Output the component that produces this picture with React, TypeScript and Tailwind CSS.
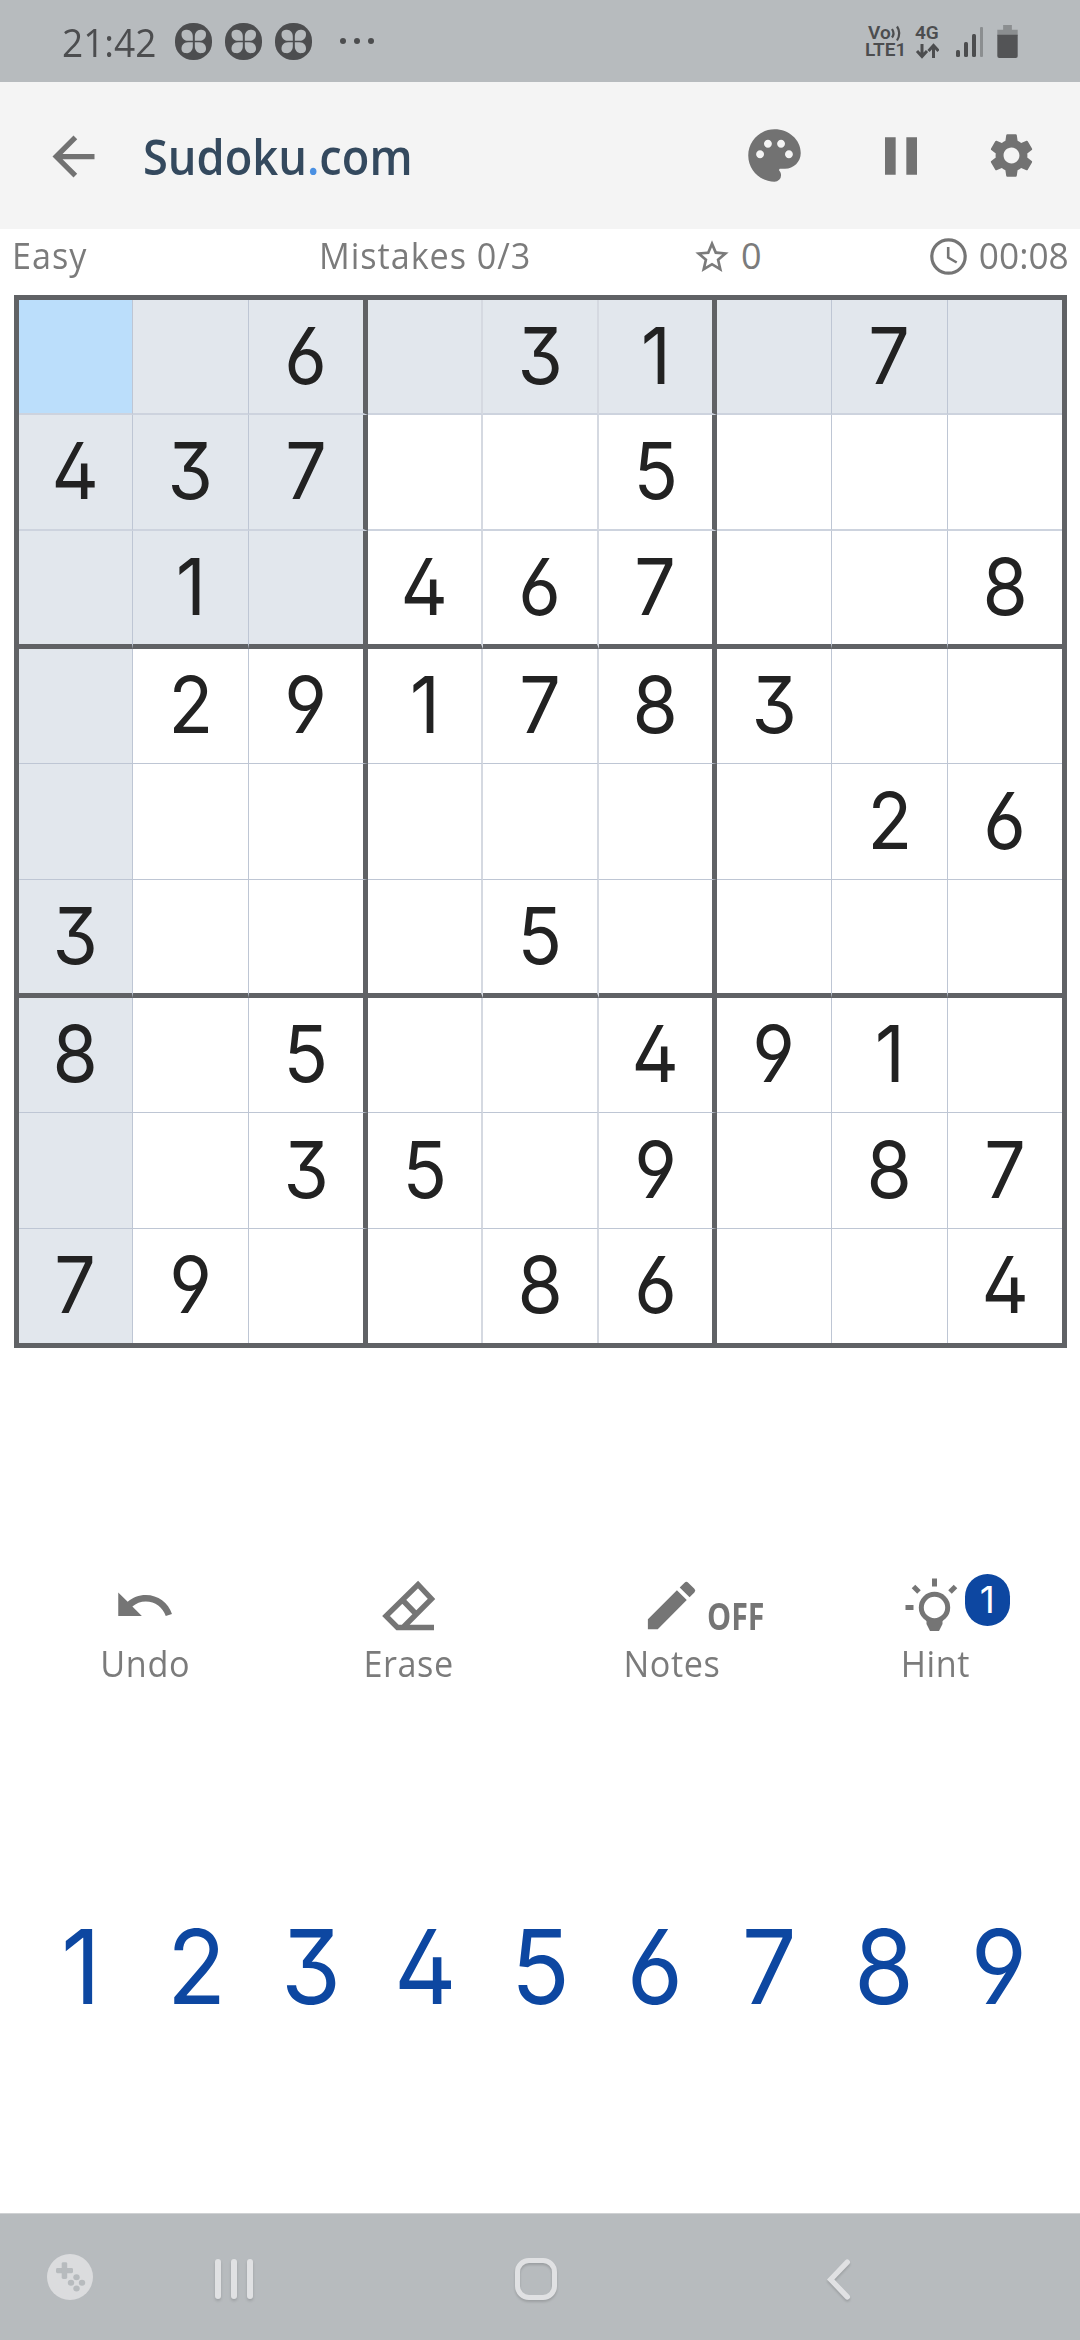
import type { ReactNode } from "react";
import { MdArrowBack, MdEdit, MdPalette, MdPause, MdSettings, MdStarBorder, MdUndo } from "react-icons/md";

const BOARD = [
  "..6.31.7.",
  "437..5...",
  ".1.467..8",
  ".291783..",
  ".......26",
  "3...5....",
  "8.5..491.",
  "..35.9.87",
  "79..86..4",
];

const TEXT = "font-['Open_Sans','Noto_Sans',sans-serif]";
const DIGIT = "font-['Inter','Noto_Sans',sans-serif] [font-feature-settings:'ss01','cv02','cv03','cv04','cv09']";

function Clover() {
  return (
    <svg viewBox="0 0 37 38" className="size-[37px]" preserveAspectRatio="none">
      <rect width="37" height="38" rx="18" fill="#4c4d4f" />
      <g fill="#b7bbbe">
        <path d="M17.8 18.2H13C8.500 18.200 6.500 15 6.500 11.500S9 7 12 7C15.500 7 17.800 10 17.800 14Z" />
        <path d="M19.800 18.200H24.500C29 18.200 31 15 31 11.500S28.500 7 25.500 7C22 7 19.800 10 19.800 14Z" />
        <path d="M17.800 19.800H13C8.500 19.800 6.500 23 6.500 26.500S9 31 12 31C15.500 31 17.800 28 17.800 24Z" />
        <path d="M19.800 19.800H24.500C29 19.800 31 23 31 26.500S28.500 31 25.500 31C22 31 19.800 28 19.800 24Z" />
      </g>
    </svg>
  );
}

function StatusBar() {
  return (
    <header className="flex h-[82px] items-start bg-[#b7bbbe] text-[#4c4d4f]">
      <div className={`${TEXT} ml-[62px] mt-[17px] w-[113px] text-[39px] leading-[50px]`}>
        <span className="inline-block origin-left scale-x-[0.95] font-normal">21:42</span>
      </div>
      <div className="mt-[23px] flex gap-[13px]">
        <Clover />
        <Clover />
        <Clover />
      </div>
      <div className="ml-[28px] mt-[38px] flex gap-2">
        <i className="size-1.5 rounded-full bg-[#4c4d4f]" />
        <i className="size-1.5 rounded-full bg-[#4c4d4f]" />
        <i className="size-1.5 rounded-full bg-[#4c4d4f]" />
      </div>
      <div className="ml-auto mr-[62px] flex font-['Roboto',sans-serif] font-semibold">
        <div className="mt-6 w-[50px] text-[19px]">
          <div className="flex h-[17px] pl-[3px] leading-[17px]">
            Vo
            <svg viewBox="0 0 12 18" className="h-[18px] w-3" fill="none" stroke="#4c4d4f" strokeWidth="2.200">
              <path d="M1 5q3 4.500 0 8.500M6 2.500q4.500 6.500 0 14" />
            </svg>
          </div>
          <div className="h-[17px] leading-[17px]">LTE1</div>
        </div>
        <div className="mt-[23px] w-[41px] text-[19px] leading-[20px]">
          4G
          <svg viewBox="0 0 24 16" className="h-4 w-6" fill="none" stroke="#4c4d4f" strokeWidth="3">
            <path d="M7 1v12M2 8l5 5.500L12 8M18.500 15V3M13.500 8l5-5.500 5 5.500" />
          </svg>
        </div>
        <svg viewBox="0 0 27 31" className="mr-[14px] mt-[26px] h-[31px] w-[27px]" fill="#4c4d4f">
          <rect x="0" y="24" width="4" height="7" rx="1.500" />
          <rect x="8" y="16" width="4" height="15" rx="1.500" />
          <rect x="16" y="8" width="4" height="23" rx="1.500" />
          <rect x="24" y="1" width="3" height="30" rx="1" fill="#8b8e90" />
        </svg>
        <svg viewBox="0 0 21 34" className="mt-[25px] h-[33px] w-[21px]">
          <path d="M6 0h9v5h6v6H0V5h6z" fill="#8b8e90" />
          <path d="M0 10h21v22q0 2-2 2H2q-2 0-2-2z" fill="#535456" />
        </svg>
      </div>
    </header>
  );
}

function TitleBar() {
  return (
    <div className="flex h-[147px] items-center bg-[#f4f4f4] text-[#727272]">
      <MdArrowBack className="ml-[42px] mt-px size-[63px]" />
      <h1 className={`${TEXT} ml-[38px] pt-0.5 text-[48px] font-semibold leading-[66px] text-[#34495e]`}>
        <span className="inline-block origin-left scale-x-[0.942]">
          Sudoku<span className="text-[#4a90e2]">.</span>com
        </span>
      </h1>
      <div className="ml-auto flex items-center">
        <MdPalette className="mr-[63px] size-[63px]" />
        <MdPause className="mr-[52px] size-[64px]" />
        <MdSettings className="mr-[42px] size-[53px]" />
      </div>
    </div>
  );
}

function InfoRow() {
  return (
    <div className={`${TEXT} flex h-[66px] items-center pb-[13px] text-[36px] text-[#7b7b7b]`}>
      <div className="ml-3 w-[307px]">
        <span className="inline-block origin-left scale-x-[0.95] tracking-[1px]">Easy</span>
      </div>
      <div className="w-[373px]">
        <span className="inline-block origin-left scale-x-[0.95] tracking-[1px]">Mistakes 0/3</span>
      </div>
      <MdStarBorder className="mt-0.5 size-10" />
      <div className="ml-[9px]">0</div>
      <svg viewBox="0 0 37 37" className="ml-auto mr-3 mt-0.5 size-[37px]" fill="none" stroke="#757575" strokeWidth="3.200">
        <circle cx="18.500" cy="18.500" r="16.700" />
        <path d="M18.200 9v10.500l8.500 5" strokeWidth="2.600" />
      </svg>
      <div className="-ml-0.5 mr-[11px]">
        <span className="inline-block origin-right scale-x-[0.98]">00:08</span>
      </div>
    </div>
  );
}

function cellClass(r: number, c: number) {
  const parts = ["flex items-center justify-center pb-[2px]"];
  if (c === 2 || c === 5) parts.push("border-r-5 border-r-[#606265]");
  else if (c === 3 || c === 4) parts.push("border-r-2 border-r-[#d5d9e1]");
  else if (c !== 8) parts.push("border-r border-r-[#bec6d4]");
  if (r === 2 || r === 5) parts.push("border-b-5 border-b-[#606265]");
  else if (r < 2) parts.push("border-b-2 border-b-[#cdd3de]");
  else if (r !== 8) parts.push("border-b border-b-[#bec6d4]");
  if (r === 0 && c === 0) parts.push("bg-[#bbdefb]");
  else if (r === 0 || c === 0 || (r < 3 && c < 3)) parts.push("bg-[#e2e7ed]");
  return parts.join(" ");
}

function Board() {
  return (
    <div
      className={`${DIGIT} ml-[14px] grid w-[1053px] grid-cols-[114px_116px_119px_115px_116px_118px_115px_116px_114px] grid-rows-[115px_116px_118px_115px_116px_118px_115px_116px_114px] border-5 border-[#606265] text-[78px] leading-none text-[#222222]`}
    >
      {BOARD.flatMap((row, r) =>
        row.split("").map((d, c) => (
          <div key={`${r}-${c}`} className={cellClass(r, c)}>
            {d !== "." && <span className="inline-block scale-x-[0.94]">{d}</span>}
          </div>
        )),
      )}
    </div>
  );
}

function Tool({ label, children }: { label: string; children: ReactNode }) {
  return (
    <div className="flex flex-col items-center">
      <div className="relative size-[63px]">{children}</div>
      <div className={`${TEXT} mt-[2px] text-[36px] leading-[50px] text-[#7b7b7b]`}>
        <span className="inline-block scale-x-[0.95] tracking-[0.6px]">{label}</span>
      </div>
    </div>
  );
}

function Tools() {
  return (
    <div className="mt-[226px] grid grid-cols-4 px-[13px] text-[#757575]">
      <Tool label="Undo">
        <MdUndo className="size-[63px]" />
      </Tool>
      <Tool label="Erase">
        <svg viewBox="0 0 63 63" className="size-[63px]" fill="none" stroke="#757575" strokeWidth="5.400">
          <path d="M57 53.500H20.500L9 42 41 10.500 54.500 25 26 53.500M25.500 26L39.500 40.500" />
        </svg>
      </Tool>
      <Tool label="Notes">
        <MdEdit className="size-[63px]" />
        <span className={`${TEXT} absolute left-[67px] top-[22px] text-[37px] font-bold leading-[40px]`}>
          <span className="inline-block origin-left scale-x-[0.82]">OFF</span>
        </span>
      </Tool>
      <Tool label="Hint">
        <svg viewBox="0 0 63 63" className="size-[63px]" fill="none" stroke="#757575">
          <circle cx="30.500" cy="33.500" r="13.200" strokeWidth="5" />
          <path d="M30.500 4.500v8M1.500 33.500h8M9.500 12.500l5.500 5.500M51.500 12.500l-5.500 5.500" strokeWidth="5" />
          <path d="M22.500 45h16v5l-3.500 7h-9l-3.500-7z" fill="#757575" stroke="none" />
        </svg>
        <span className={`${DIGIT} absolute left-[61px] top-0 flex h-[52px] w-[45px] items-center justify-center rounded-full bg-[#0d47a1] text-[37px] text-white`}>
          1
        </span>
      </Tool>
    </div>
  );
}

function NumberPad() {
  return (
    <div className={`${DIGIT} mt-[214px] grid grid-cols-9 px-6 text-center text-[103px] leading-[128px] text-[#0d47a1]`}>
      {[1, 2, 3, 4, 5, 6, 7, 8, 9].map((n) => (
        <div key={n}>
          <span className="inline-block scale-x-[0.94]">{n}</span>
        </div>
      ))}
    </div>
  );
}

function NavBar() {
  return (
    <nav className="mt-auto flex h-[127px] items-center border-t border-[#cfd1d3] bg-[#b7bbbe]">
      <svg viewBox="0 0 46 48" className="ml-[47px] size-[46px]" preserveAspectRatio="none">
        <ellipse cx="23" cy="24" rx="23" ry="24" fill="#dbdcde" />
        <g fill="#b7bbbe">
          <rect x="9" y="14.500" width="17" height="5.500" rx="1.500" />
          <rect x="14.700" y="8.500" width="5.500" height="17.500" rx="1.500" />
          <circle cx="29.500" cy="24.300" r="3.200" />
          <circle cx="24" cy="30" r="3.200" />
          <circle cx="35" cy="30" r="3.200" />
          <circle cx="29.500" cy="36" r="3.200" />
        </g>
      </svg>
      <div className="ml-[122px] mt-1 flex gap-[10px]">
        <i className="h-10 w-1.5 rounded-full bg-[#e0e1e3] shadow-[0_2px_3px_rgba(0,0,0,0.150)]" />
        <i className="h-10 w-1.5 rounded-full bg-[#e0e1e3] shadow-[0_2px_3px_rgba(0,0,0,0.150)]" />
        <i className="h-10 w-1.5 rounded-full bg-[#e0e1e3] shadow-[0_2px_3px_rgba(0,0,0,0.150)]" />
      </div>
      <div className="ml-[262px] mt-1 size-[42px] rounded-[14px] border-5 border-[#e0e1e3] drop-shadow-[0_2px_1px_rgba(0,0,0,0.150)]" />
      <svg
        viewBox="0 0 24 42"
        className="ml-[270px] mt-1 h-[41px] w-6 overflow-visible drop-shadow-[0_2px_1px_rgba(0,0,0,0.150)]"
        fill="none"
        stroke="#e0e1e3"
        strokeWidth="5.500"
        strokeLinecap="round"
      >
        <path d="M20.500 3.200L3.500 21l17 17.800" />
      </svg>
    </nav>
  );
}

export default function App() {
  return (
    <div className="flex h-[2340px] w-[1080px] flex-col overflow-hidden bg-white">
      <StatusBar />
      <TitleBar />
      <InfoRow />
      <Board />
      <Tools />
      <NumberPad />
      <NavBar />
    </div>
  );
}
